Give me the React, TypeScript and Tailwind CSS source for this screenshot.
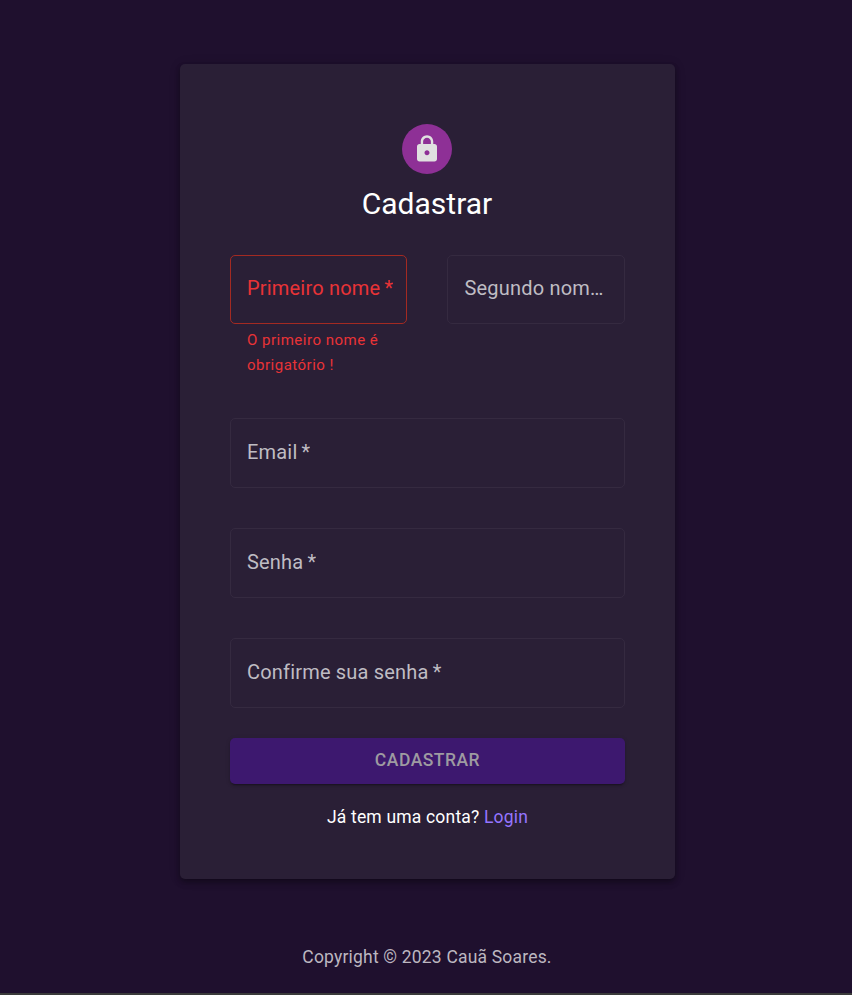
import React from "react";

type FieldProps = {
  label: string;
  required?: boolean;
  error?: boolean;
  className?: string;
};

function Field({ label, required, error, className = "h-[70px] pr-4 pl-4" }: FieldProps) {
  return (
    <div
      className={`flex items-center rounded-[5px] border pb-[2px] ${
        error ? "border-[#a32a22] text-[#e93336]" : "border-[#352a40] text-[#bfbcc3]"
      } ${className}`}
    >
      <span className="truncate text-[20px] leading-[28.75px] tracking-[0.1876px]">
        {label}
        {required && <span className="-ml-px"> *</span>}
      </span>
    </div>
  );
}

export default function App() {
  return (
    <div className="flex h-[995px] w-full flex-col items-center bg-[#1f102e] pt-16 font-['Roboto',sans-serif]">
      <main className="ml-[3px] flex h-[815px] w-[495px] flex-col items-center rounded-[5px] bg-[#2a1f36] px-[50px] pt-[60px] shadow-[0_2px_5px_-1px_rgba(0,0,0,0.25),0_4px_6px_rgba(0,0,0,0.18),0_1px_12px_rgba(0,0,0,0.14)]">
        <div className="mr-px flex size-[50px] items-center justify-center rounded-full bg-[#8e3096]">
          <svg viewBox="0 0 24 24" className="size-[30px] fill-[#e0e0e0]">
            <path d="M18 8h-1V6c0-2.76-2.24-5-5-5S7 3.24 7 6v2H6c-1.1 0-2 .9-2 2v10c0 1.100.9 2 2 2h12c1.100 0 2-.9 2-2V10c0-1.100-.9-2-2-2zm-6 9c-1.100 0-2-.9-2-2s.9-2 2-2 2 .9 2 2-.9 2-2 2zm3.100-9H8.900V6c0-1.710 1.390-3.100 3.100-3.100s3.100 1.390 3.100 3.100v2z" />
          </svg>
        </div>
        <h1 className="mt-[10px] mr-px text-[30px] leading-10 text-white">Cadastrar</h1>
        <form className="mt-[31px] w-full">
          <div className="flex h-[163px] justify-between">
            <div className="w-[177px]">
              <Field label="Primeiro nome" required error className="h-[69px] pr-2 pl-4" />
              <p className="mt-1 ml-[17px] text-[15px] leading-[24.9px] tracking-[0.5px] text-[#e93336]">
                O primeiro nome é<br />obrigatório !
              </p>
            </div>
            <div className="w-[178px]">
              <Field label="Segundo nome *" className="h-[69px] pr-[18px] pl-[16.5px]" />
            </div>
          </div>
          <div className="flex flex-col gap-10">
            <Field label="Email" required />
            <Field label="Senha" required />
            <Field label="Confirme sua senha" required />
          </div>
          <button
            type="button"
            className="mt-[30px] flex h-[46px] w-full items-center justify-center rounded-[5px] bg-[#3d186f] pb-[2px] text-[17.5px] leading-[30.6px] font-medium tracking-[0.5px] text-[#9e9ba1] shadow-[0_3px_1px_-2px_rgba(0,0,0,0.2),0_2px_2px_rgba(0,0,0,0.14),0_1px_5px_rgba(0,0,0,0.12)]"
          >
            CADASTRAR
          </button>
        </form>
        <p className="mt-5 text-[17.5px] leading-[26px] tracking-[0.1874px] text-white">
          Já tem uma conta? <a className="text-[#9575ff]">Login</a>
        </p>
      </main>
      <footer className="mt-[66px] ml-[2px] text-[17.5px] leading-[25px] tracking-[0.1874px] text-[#bcb7c0]">
        Copyright © 2023 Cauã Soares.
      </footer>
      <div className="mt-auto h-[2px] w-full bg-[#3a3a3a]" />
    </div>
  );
}
